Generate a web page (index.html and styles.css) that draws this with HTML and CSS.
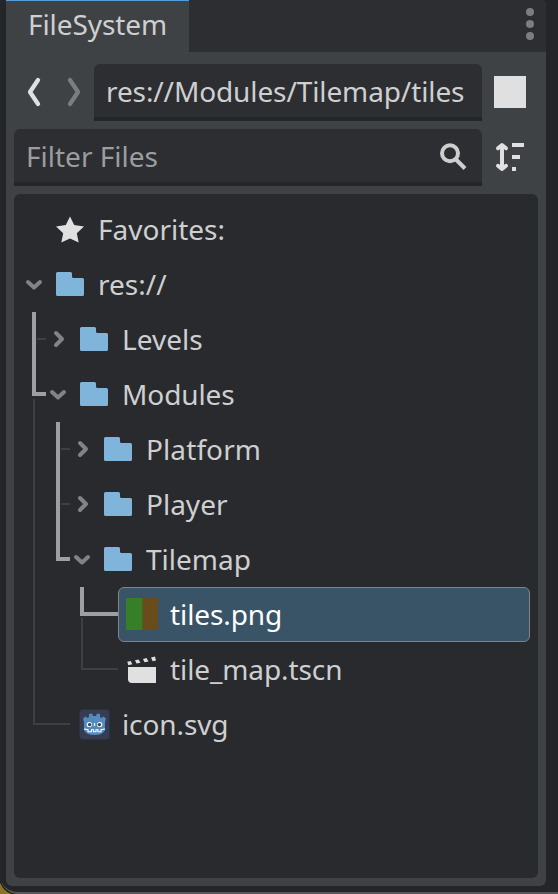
FILE: index.html
```html
<!DOCTYPE html>
<html lang="en">
<head>
<meta charset="utf-8">
<title>FileSystem</title>
<link rel="stylesheet" href="styles.css">
</head>
<body>
<svg width="0" height="0" class="defs">
  <symbol id="folder" viewBox="0 0 32 32"><path d="M3.500 4h13q1.500 0 1.500 1.500V8.500q0 1.500 1.500 1.500h9q1.500 0 1.500 1.500v15q0 1.500-1.500 1.500H3.500Q2 28 2 26.500v-21Q2 4 3.500 4z" fill="#80b5db"/></symbol>
  <symbol id="down" viewBox="0 0 24 24"><path d="M6 10l6 5.500 6-5.500" fill="none" stroke="#828385" stroke-width="4" stroke-linecap="round" stroke-linejoin="round"/></symbol>
  <symbol id="right" viewBox="0 0 24 24"><path d="M10 6l6 6-6 6" fill="none" stroke="#828385" stroke-width="4" stroke-linecap="round" stroke-linejoin="round"/></symbol>
</svg>
<div class="window">
  <section class="dock">
    <header class="tabs">
      <div class="tab">FileSystem</div>
      <svg class="more" width="8" height="32" viewBox="0 0 8 32" fill="#7c7d80"><circle cx="4" cy="4" r="4"/><circle cx="4" cy="16" r="4"/><circle cx="4" cy="28" r="4"/></svg>
    </header>
    <main class="body">
      <div class="bar">
        <div class="nav">
          <svg width="40" height="40" viewBox="0 0 40 40"><path d="M24 8l-8 12 8 12" fill="none" stroke="#e0e0e0" stroke-width="4.300" stroke-linecap="round" stroke-linejoin="round"/></svg>
          <svg width="40" height="40" viewBox="0 0 40 40"><path d="M16 8l8 12-8 12" fill="none" stroke="#7b7d80" stroke-width="4.300" stroke-linecap="round" stroke-linejoin="round"/></svg>
        </div>
        <div class="field path">res://Modules/Tilemap/tiles</div>
        <div class="tool"><span class="swatch"></span></div>
      </div>
      <div class="bar">
        <div class="field filter"><span>Filter Files</span>
          <svg width="32" height="32" viewBox="0 0 32 32" fill="none" stroke="#cecece" stroke-width="4"><circle cx="14" cy="12.200" r="8"/><path d="M19.500 18l9.500 9.500"/></svg>
        </div>
        <div class="tool">
          <svg width="32" height="32" viewBox="0 0 32 32"><g fill="#e0e0e0"><path d="M18 2h12v4H18zM18 14h8v4h-8zM18 26h4v4h-4z"/><path d="M6 6h4v20H6z"/></g><path d="M4 7.200L8 4l4 3.200M4 24.800L8 28l4-3.200" fill="#e0e0e0" stroke="#e0e0e0" stroke-width="4" stroke-linecap="round" stroke-linejoin="round"/></svg>
        </div>
      </div>
      <div class="tree">
        <svg class="guides" width="524" height="684" viewBox="0 0 524 684" fill="none">
          <path d="M20 205V530H56M23 145h9M47 255h9M47 310h9M68 424v51h36" stroke="#3e3f43" stroke-width="2"/>
          <path d="M20 118V200H32M44 228V365H56M68 393V420H104" stroke="#9e9fa1" stroke-width="4"/>
        </svg>
        <div class="row"><i class="arrow"></i><svg class="icon" viewBox="0 0 32 32"><path d="M16 3.500l4.200 8.500 9.800 1.400-7.200 6.800 1.900 9.400L16 25.500l-8.700 4.100 1.900-9.400L2 13.400l9.800-1.400z" fill="#e0e0e0"/></svg><span>Favorites:</span></div>
        <div class="row"><svg class="arrow"><use href="#down"/></svg><svg class="icon"><use href="#folder"/></svg><span>res://</span></div>
        <div class="row l1"><svg class="arrow"><use href="#right"/></svg><svg class="icon"><use href="#folder"/></svg><span>Levels</span></div>
        <div class="row l1"><svg class="arrow"><use href="#down"/></svg><svg class="icon"><use href="#folder"/></svg><span class="tight">Modules</span></div>
        <div class="row l2"><svg class="arrow"><use href="#right"/></svg><svg class="icon"><use href="#folder"/></svg><span class="loose">Platform</span></div>
        <div class="row l2"><svg class="arrow"><use href="#right"/></svg><svg class="icon"><use href="#folder"/></svg><span>Player</span></div>
        <div class="row l2"><svg class="arrow"><use href="#down"/></svg><svg class="icon"><use href="#folder"/></svg><span>Tilemap</span></div>
        <div class="row selected"><svg class="icon" viewBox="0 0 32 32"><rect width="17" height="32" rx="1" fill="#377f27"/><path d="M16 0h16v32H16z" fill="#694b1c"/><path d="M16 0h1v32h-1z" fill="#4f5f20"/></svg><span class="tight">tiles.png</span></div>
        <div class="row l3"><i class="arrow"></i><svg class="icon" viewBox="0 0 32 32" fill="#e0e0e0"><path d="M2 14h28v16H6q-4 0-4-4z"/><path d="M1.300 8.800l3.400-.700 1.600 3.200-4 .900zM9 7.200l3.500-.700 2 3.200-4 .900zM17 5.900l3.500-.800 2 3.300-4 .800zM25 4.500l4-.900 1 3.900-3.300.700z"/></svg><span class="tight">tile_map.tscn</span></div>
        <div class="row l1"><i class="arrow"></i><svg class="icon" viewBox="0 0 32 32">
          <rect x="1.500" y="1.500" width="30" height="30" rx="3" fill="#363d52" stroke="#2b3042"/>
          <path d="M5 10.500l2.500-2 2 1.500 1.500-1V6l3-.500 1 2.500h3l1-2.500 3 .500v3l1.500 1 2-1.500 2.500 2-1 4v7.500q-2 5-10.500 5T6 22v-7.500z" fill="#538bc0"/>
          <path d="M6 21l4 .700v2h3.500v-2h2v2h2.500v-2h2v2h3v-2l4-.700" fill="none" stroke="#fff" stroke-width="1.100"/>
          <path d="M16.500 15v3" stroke="#fff" stroke-width="1.400"/><circle cx="11.300" cy="16.500" r="2.600" fill="#fff"/><circle cx="21.700" cy="16.500" r="2.600" fill="#fff"/><circle cx="11.600" cy="16.600" r="1.700" fill="#414042"/><circle cx="21.400" cy="16.600" r="1.700" fill="#414042"/>
        </svg><span class="tight">icon.svg</span></div>
      </div>
    </main>
  </section>
</div>
</body>
</html>
```
FILE: styles.css
```css
* { box-sizing: border-box; }
body {
  margin: 0;
  width: 558px;
  height: 894px;
  overflow: hidden;
  background: #8a7426;
  color: #cecfd0;
  font: 28px/38px "Noto Sans", sans-serif;
}
svg { display: block; flex: none; }
.defs { position: absolute; }
.window {
  height: 894px;
  padding: 0 12px 6px 6px;
  background: #242529;
  border-bottom: 2px solid #55575a;
  border-bottom-left-radius: 18px;
  box-shadow: 0 0 0 1px #0c0c0c;
}
.dock {
  height: 886px;
  background: #3f4245;
  border-radius: 0 6px 6px 6px;
  overflow: hidden;
}
.tabs {
  display: flex;
  justify-content: space-between;
  height: 52px;
  padding-right: 12px;
  background: #2d2e32;
}
.tab {
  width: 183px;
  padding: 4px 0 0 22px;
  background: #3f4245;
  border-top: 1px solid #569eda;
  letter-spacing: -0.08px;
}
.more { margin-top: 8px; }
.body {
  display: flex;
  flex-direction: column;
  gap: 8px;
  padding: 12px 8px 8px;
}
.bar { display: flex; align-items: center; height: 57px; padding-bottom: 1px; }
.nav { display: flex; width: 80px; }
.field {
  flex: 1;
  align-self: flex-start;
  height: 57px;
  padding: 8px 12px 0;
  background: #2d2e32;
  border-bottom: 4px solid #242529;
  border-radius: 6px 6px 0 0;
  white-space: nowrap;
}
.path { letter-spacing: -0.11px; }
.filter {
  display: flex;
  justify-content: space-between;
  padding-right: 14px;
  color: #9c9d9f;
}
.filter svg { margin-top: 4px; }
.tool { width: 56px; padding-left: 12px; }
.swatch { display: block; width: 32px; height: 32px; background: #e0e0e0; }
.tree {
  position: relative;
  height: 684px;
  padding: 8px;
  background: #292a2d;
  border-radius: 6px;
}
.guides { position: absolute; top: 0; left: 0; }
.row {
  position: relative;
  display: flex;
  align-items: center;
  height: 55px;
  padding-bottom: 1px;
}
.row span { margin-left: 12px; }
.tight { letter-spacing: -0.1px; }
.loose { letter-spacing: 0.1px; }
.arrow { width: 24px; height: 24px; margin-right: 8px; flex: none; }
.icon { width: 32px; height: 32px; }
.l1 { padding-left: 24px; }
.l2 { padding-left: 48px; }
.l3 { padding-left: 72px; }
.selected {
  margin-left: 96px;
  padding-left: 7px;
  background: #395467;
  border: 1px solid #828385;
  border-radius: 6px;
  color: #fff;
}
```
